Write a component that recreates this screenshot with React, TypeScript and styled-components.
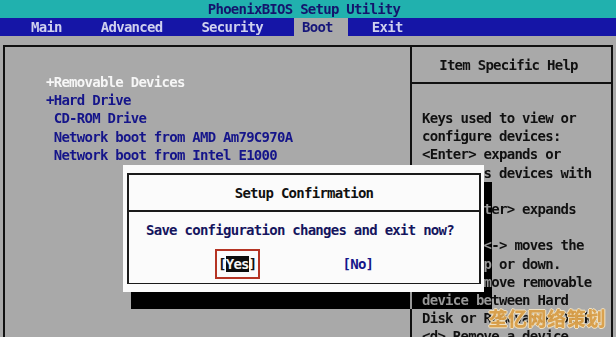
import React from "react";
import styled, { createGlobalStyle } from "styled-components";

const GlobalStyle = createGlobalStyle`
  html, body {
    margin: 0;
    padding: 0;
    background: #a9a9a9;
  }
  body {
    font-family: "DejaVu Sans Mono", "Liberation Mono", monospace;
    font-size: 14px;
    font-weight: bold;
    letter-spacing: -0.73px;
  }
`;

const Screen = styled.div`
  position: relative;
  width: 616px;
  height: 337px;
  overflow: hidden;
  background: #a9a9a9;
  display: flex;
  flex-direction: column;
`;

const TitleBar = styled.div`
  height: 18px;
  line-height: 18px;
  background: #21b1ae;
  color: #14146c;
  text-align: center;
  padding-right: 8px;
  white-space: pre;
`;

const MenuBar = styled.div`
  height: 18px;
  background: #1515a6;
  display: flex;
  gap: 23px;
  padding-left: 23px;
`;

const MenuItem = styled.div<{ $active?: boolean }>`
  line-height: 18px;
  padding: 0 ${(p) => (p.$active ? 15 : 8)}px 0 8px;
  margin-right: ${(p) => (p.$active ? -7 : 0)}px;
  background: ${(p) => (p.$active ? "#a9a9a9" : "transparent")};
  color: ${(p) => (p.$active ? "#16167a" : "#cfd0ee")};
`;

const Frame = styled.div`
  flex: 1;
  margin: 9px 3px 0 3px;
  border: 2px solid #111;
  border-bottom: none;
  display: grid;
  grid-template-columns: 407px 1fr;
`;

const ItemList = styled.div`
  padding: 26px 0 0 41px;
  border-right: 2px solid #111;
`;

const Item = styled.div<{ $selected?: boolean }>`
  height: 18.2px;
  line-height: 18.2px;
  white-space: pre;
  color: ${(p) => (p.$selected ? "#f6f6f6" : "#15158a")};
`;

const HelpPanel = styled.div`
  display: flex;
  flex-direction: column;
`;

const HelpHeader = styled.div`
  height: 35px;
  display: flex;
  align-items: center;
  justify-content: center;
  padding-right: 6px;
  border-bottom: 2px solid #111;
  color: #111;
`;

const HelpBody = styled.div`
  padding: 25px 0 0 10px;
  color: #111;
`;

const HelpLine = styled.div`
  height: 18.2px;
  line-height: 18.2px;
  white-space: pre;
`;

const DialogLayer = styled.div`
  position: absolute;
  left: 123px;
  top: 165px;
  width: 361px;
  height: 127px;
`;

const DialogShadow = styled.div`
  position: absolute;
  left: 8px;
  top: 17px;
  width: 100%;
  height: 100%;
  background: #a9a9a9;
  mix-blend-mode: difference;
`;

const DialogBox = styled.div`
  position: relative;
  height: 100%;
  box-sizing: border-box;
  background: #fbfbfb;
  padding: 8px 3px 8px 4px;
`;

const DialogFrame = styled.div`
  height: 100%;
  box-sizing: border-box;
  border: 2px solid #1a1a1a;
  border-bottom-width: 1px;
  display: flex;
  flex-direction: column;
`;

const DialogTitle = styled.div`
  height: 35px;
  display: flex;
  align-items: center;
  justify-content: center;
  border-bottom: 2px solid #1a1a1a;
  color: #111;
`;

const DialogBody = styled.div`
  padding: 9px 0 0 17px;
  display: flex;
  flex-direction: column;
  gap: 18px;
  color: #15155e;
`;

const Message = styled.div`
  line-height: 18.2px;
  white-space: pre;
`;

const Buttons = styled.div`
  display: flex;
  align-items: center;
  gap: 80px;
  padding-left: 69px;
  margin-top: -8px;
`;

const Choice = styled.div<{ $focused?: boolean }>`
  line-height: 18.2px;
  padding: 4px 1px;
  border: 2px solid ${(p) => (p.$focused ? "#b53424" : "transparent")};
  color: ${(p) => (p.$focused ? "#111" : "#15158a")};
  white-space: pre;
`;

const Highlight = styled.span`
  background: #0c0c0c;
  color: #f4f4f4;
`;

const Watermark = styled.div`
  position: absolute;
  right: 10px;
  bottom: 8px;
  font-family: "Noto Sans CJK SC", sans-serif;
  font-size: 19px;
  font-weight: 900;
  letter-spacing: 0.6px;
  line-height: 22px;
  color: #dca14a;
  text-shadow: 1px 0 0 #f3e4c4, -1px 0 0 #f3e4c4, 0 1px 0 #f3e4c4,
    0 -1px 0 #f3e4c4;
  opacity: 0.95;
`;

const menu = ["Main", "Advanced", "Security", "Boot", "Exit"];

const bootItems = [
  { label: "+Removable Devices", selected: true },
  { label: "+Hard Drive" },
  { label: " CD-ROM Drive" },
  { label: " Network boot from AMD Am79C970A" },
  { label: " Network boot from Intel E1000" },
];

const helpLines = [
  "Keys used to view or",
  "configure devices:",
  "<Enter> expands or",
  "collapses devices with",
  "a + or -",
  "<Ctrl+Enter> expands",
  "all",
  "<+> and <-> moves the",
  "device up or down.",
  "<n> May move removable",
  "device between Hard",
  "Disk or Removable Disk",
  "<d> Remove a device",
];

const App: React.FC = () => {
  return (
    <Screen>
      <GlobalStyle />
      <TitleBar>PhoenixBIOS Setup Utility</TitleBar>
      <MenuBar>
        {menu.map((m) => (
          <MenuItem key={m} $active={m === "Boot"}>
            {m}
          </MenuItem>
        ))}
      </MenuBar>
      <Frame>
        <ItemList>
          {bootItems.map((it) => (
            <Item key={it.label} $selected={it.selected}>
              {it.label}
            </Item>
          ))}
        </ItemList>
        <HelpPanel>
          <HelpHeader>Item Specific Help</HelpHeader>
          <HelpBody>
            {helpLines.map((l, i) => (
              <HelpLine key={i}>{l}</HelpLine>
            ))}
          </HelpBody>
        </HelpPanel>
      </Frame>
      <DialogLayer>
        <DialogShadow />
        <DialogBox>
          <DialogFrame>
            <DialogTitle>Setup Confirmation</DialogTitle>
            <DialogBody>
              <Message>Save configuration changes and exit now?</Message>
              <Buttons>
                <Choice $focused>
                  [<Highlight>Yes</Highlight>]
                </Choice>
                <Choice>[No]</Choice>
              </Buttons>
            </DialogBody>
          </DialogFrame>
        </DialogBox>
      </DialogLayer>
      <Watermark>垄亿网络策划</Watermark>
    </Screen>
  );
};

export default App;
